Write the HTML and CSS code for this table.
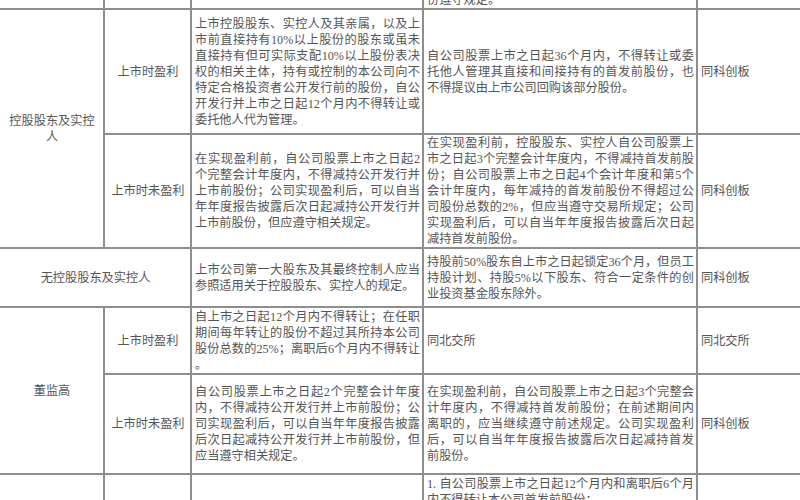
FILE: index.html
```html
<!DOCTYPE html>
<html lang="zh-CN">
<head>
<meta charset="utf-8">
<title>减持规定对比</title>
<link rel="stylesheet" href="styles.css">
</head>
<body>
<div class="page">
<table class="grid">
<colgroup><col class="c1"><col class="c2"><col class="c3"><col class="c4"><col class="c5"></colgroup>
<tbody>
<tr class="r0">
<td></td><td></td><td></td>
<td class="txt bot"><span class="ln e">份遵守规定。</span></td>
<td></td>
</tr>
<tr class="r1">
<td rowspan="2" class="hd"><span class="hl">控股股东及实控</span><span class="hl">人</span></td>
<td class="hd">上市时盈利</td>
<td class="txt">
<span class="ln">上市控股股东、实控人及其亲属，以及上</span>
<span class="ln">市前直接持有10%以上股份的股东或虽未</span>
<span class="ln">直接持有但可实际支配10%以上股份表决</span>
<span class="ln">权的相关主体，持有或控制的本公司向不</span>
<span class="ln">特定合格投资者公开发行前的股份，自公</span>
<span class="ln">开发行并上市之日起12个月内不得转让或</span>
<span class="ln e">委托他人代为管理。</span>
</td>
<td class="txt">
<span class="ln">自公司股票上市之日起36个月内，不得转让或委</span>
<span class="ln">托他人管理其直接和间接持有的首发前股份，也</span>
<span class="ln e">不得提议由上市公司回购该部分股份。</span>
</td>
<td class="txt"><span class="ln e">同科创板</span></td>
</tr>
<tr class="r2">
<td class="hd">上市时未盈利</td>
<td class="txt">
<span class="ln">在实现盈利前，自公司股票上市之日起2</span>
<span class="ln">个完整会计年度内，不得减持公开发行并</span>
<span class="ln">上市前股份；公司实现盈利后，可以自当</span>
<span class="ln">年年度报告披露后次日起减持公开发行并</span>
<span class="ln e">上市前股份，但应遵守相关规定。</span>
</td>
<td class="txt">
<span class="ln">在实现盈利前，控股股东、实控人自公司股票上</span>
<span class="ln">市之日起3个完整会计年度内，不得减持首发前股</span>
<span class="ln">份；自公司股票上市之日起4个会计年度和第5个</span>
<span class="ln">会计年度内，每年减持的首发前股份不得超过公</span>
<span class="ln">司股份总数的2%，但应当遵守交易所规定；公司</span>
<span class="ln">实现盈利后，可以自当年年度报告披露后次日起</span>
<span class="ln e">减持首发前股份。</span>
</td>
<td class="txt"><span class="ln e">同科创板</span></td>
</tr>
<tr class="r3">
<td colspan="2" class="hd">无控股股东及实控人</td>
<td class="txt">
<span class="ln">上市公司第一大股东及其最终控制人应当</span>
<span class="ln e">参照适用关于控股股东、实控人的规定。</span>
</td>
<td class="txt">
<span class="ln">持股前50%股东自上市之日起锁定36个月，但员工</span>
<span class="ln">持股计划、持股5%以下股东、符合一定条件的创</span>
<span class="ln e">业投资基金股东除外。</span>
</td>
<td class="txt"><span class="ln e">同科创板</span></td>
</tr>
<tr class="r4">
<td rowspan="2" class="hd">董监高</td>
<td class="hd">上市时盈利</td>
<td class="txt">
<span class="ln">自上市之日起12个月内不得转让；在任职</span>
<span class="ln">期间每年转让的股份不超过其所持本公司</span>
<span class="ln">股份总数的25%；离职后6个月内不得转让</span>
<span class="ln e">。</span>
</td>
<td class="txt"><span class="ln e">同北交所</span></td>
<td class="txt"><span class="ln e">同北交所</span></td>
</tr>
<tr class="r5">
<td class="hd">上市时未盈利</td>
<td class="txt">
<span class="ln">自公司股票上市之日起2个完整会计年度</span>
<span class="ln">内，不得减持公开发行并上市前股份；公</span>
<span class="ln">司实现盈利后，可以自当年年度报告披露</span>
<span class="ln">后次日起减持公开发行并上市前股份，但</span>
<span class="ln e">应当遵守相关规定。</span>
</td>
<td class="txt">
<span class="ln">在实现盈利前，自公司股票上市之日起3个完整会</span>
<span class="ln">计年度内，不得减持首发前股份；在前述期间内</span>
<span class="ln">离职的，应当继续遵守前述规定。公司实现盈利</span>
<span class="ln">后，可以自当年年度报告披露后次日起减持首发</span>
<span class="ln e">前股份。</span>
</td>
<td class="txt"><span class="ln e">同科创板</span></td>
</tr>
<tr class="r6">
<td></td><td></td><td></td>
<td class="txt top">
<span class="ln">1. 自公司股票上市之日起12个月内和离职后6个月</span>
<span class="ln e">内不得转让本公司首发前股份；</span>
</td>
<td></td>
</tr>
</tbody>
</table>
</div>
</body>
</html>
```

FILE: styles.css
```css
html, body {
  margin: 0;
  padding: 0;
  background: #ffffff;
}

body {
  width: 800px;
  height: 500px;
  overflow: hidden;
  font-family: "Liberation Serif", "Noto Sans CJK SC", serif;
  font-size: 12.2px;
  color: #555555;
}

.page {
  width: 800px;
  height: 500px;
  overflow: hidden;
}

.grid {
  border-collapse: collapse;
  table-layout: fixed;
  width: 818px;
  margin-top: -10px;
  margin-left: -2px;
}

.c1 { width: 105px; }
.c2 { width: 87px; }
.c3 { width: 232px; }
.c4 { width: 274px; }
.c5 { width: 120px; }

.grid td {
  border: 2px solid #8e8e8e;
  padding: 0 2px 0 3px;
  vertical-align: middle;
  line-height: 16px;
  overflow: hidden;
}

.hd {
  text-align: center;
  line-height: 17px;
}

.hl {
  display: block;
  text-align: center;
  white-space: nowrap;
}

.ln {
  display: block;
  text-align: justify;
  text-align-last: justify;
  white-space: nowrap;
}

.ln.e {
  text-align: left;
  text-align-last: left;
}

.bot { vertical-align: bottom; }
.grid td.top { vertical-align: top; padding-top: 1px; }

.r0 { height: 17px; }
.r1 { height: 125px; }
.r2 { height: 114px; }
.r3 { height: 59px; }
.r4 { height: 67px; }
.r5 { height: 100px; }
.r6 { height: 60px; }
```
